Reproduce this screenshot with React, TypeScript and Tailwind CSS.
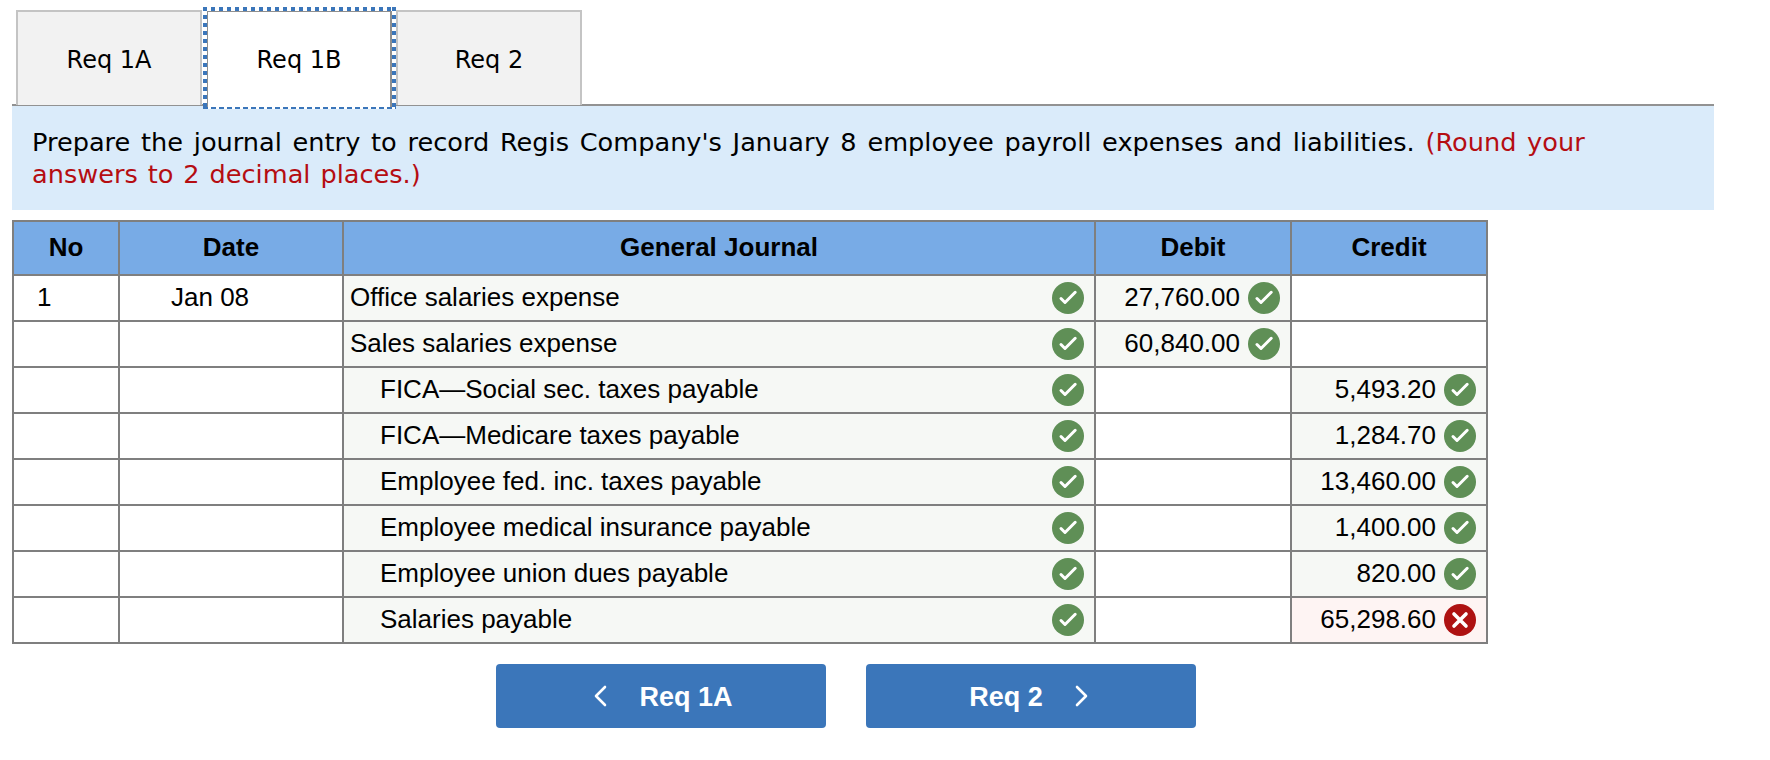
import React from "react";

function Ok() {
  return (
    <svg viewBox="0 0 32 32" className="w-8 h-8 shrink-0 block">
      <circle cx="16" cy="16" r="16" fill="#5f8f56" />
      <path d="M9 16.5 L13 20.5 L23.2 10.3" fill="none" stroke="#fff" strokeWidth="3" strokeLinecap="round" strokeLinejoin="round" />
    </svg>
  );
}

function Bad() {
  return (
    <svg viewBox="0 0 32 32" className="w-8 h-8 shrink-0 block">
      <circle cx="16" cy="16" r="16" fill="#ae1212" />
      <path d="M10 10 L22 22 M22 10 L10 22" fill="none" stroke="#fff" strokeWidth="3.6" strokeLinecap="round" />
    </svg>
  );
}

type Row = { no?: string; date?: string; acct: string; indent?: boolean; debit?: string; credit?: string; wrong?: boolean };

const rows: Row[] = [
  { no: "1", date: "Jan 08", acct: "Office salaries expense", debit: "27,760.00" },
  { acct: "Sales salaries expense", debit: "60,840.00" },
  { acct: "FICA—Social sec. taxes payable", indent: true, credit: "5,493.20" },
  { acct: "FICA—Medicare taxes payable", indent: true, credit: "1,284.70" },
  { acct: "Employee fed. inc. taxes payable", indent: true, credit: "13,460.00" },
  { acct: "Employee medical insurance payable", indent: true, credit: "1,400.00" },
  { acct: "Employee union dues payable", indent: true, credit: "820.00" },
  { acct: "Salaries payable", indent: true, credit: "65,298.60", wrong: true },
];

function Amount({ value, wrong }: { value?: string; wrong?: boolean }) {
  if (!value) return <td className="border-2 border-[#7f7f7f] bg-white p-0" />;
  return (
    <td className={`border-2 border-[#7f7f7f] p-0 ${wrong ? "bg-[#fef4f3]" : "bg-[#f6f8f5]"}`}>
      <div className="flex items-center justify-end gap-2 pr-[10px]">
        <span className="pb-[2px]">{value}</span>
        {wrong ? <Bad /> : <Ok />}
      </div>
    </td>
  );
}

function Tab({ label, active }: { label: string; active?: boolean }) {
  if (active) {
    return (
      <div className="relative z-10 w-[186px] h-[97px] bg-white border-2 border-b-0 border-[#8f8f8f] flex items-center justify-center text-black">
        {label}
        <span className="absolute left-[-5px] right-[-6px] top-[-5px] h-[4px] bg-[repeating-linear-gradient(90deg,#3b76ba_0,#3b76ba_4px,#ffffff_4px,#ffffff_8px)]" />
        <span className="absolute left-[-5px] top-[-5px] bottom-[-2px] w-[4px] bg-[repeating-linear-gradient(180deg,#3b76ba_0,#3b76ba_4px,#ffffff_4px,#ffffff_8px)]" />
        <span className="absolute right-[-6px] top-[-5px] bottom-[-2px] w-[4px] bg-[repeating-linear-gradient(180deg,#3b76ba_0,#3b76ba_4px,#ffffff_4px,#ffffff_8px)]" />
        <span className="absolute left-[-5px] right-[-6px] bottom-[-2px] h-[2px] bg-[repeating-linear-gradient(90deg,#3b76ba_0,#3b76ba_5px,#ffffff_5px,#ffffff_8px)]" />
      </div>
    );
  }
  return (
    <div className="w-[186px] h-[95px] bg-[#f2f2f2] border-2 border-b-0 border-[#c4c4c4] flex items-center justify-center pt-[2px] text-black">
      {label}
    </div>
  );
}

const Chevron = ({ dir }: { dir: "left" | "right" }) => (
  <svg viewBox="0 0 14 22" className="w-[14px] h-[22px] block">
    <path
      d={dir === "left" ? "M12 2 L3 11 L12 20" : "M2 2 L11 11 L2 20"}
      fill="none"
      stroke="#fff"
      strokeWidth="2.6"
      strokeLinecap="round"
      strokeLinejoin="round"
    />
  </svg>
);

export default function App() {
  return (
    <div className="w-[1770px] h-[760px] bg-white pt-[10px] overflow-hidden font-['Liberation_Sans',Arial,sans-serif] text-black">
      <div className="ml-4 flex gap-1 items-start h-[94px] text-[24px] font-['DejaVu_Sans',Verdana,sans-serif]">
        <Tab label="Req 1A" />
        <Tab label="Req 1B" active />
        <Tab label="Req 2" />
      </div>
      <div className="ml-3 w-[1702px] h-[106px] bg-[#daebfa] border-t-2 border-[#929292] pl-[20px] pt-[20px] text-[25.6px] leading-[32px] [word-spacing:2.6px] font-['DejaVu_Sans',Verdana,sans-serif]">
        Prepare the journal entry to record Regis Company's January 8 employee payroll expenses and liabilities.{" "}
        <span className="text-[#b50d12]">
          (Round your
          <br />
          <span className="[word-spacing:1.8px]">answers to 2 decimal places.)</span>
        </span>
      </div>
      <table className="ml-3 mt-[10px] table-fixed border-collapse text-[26px] leading-[32px] w-[1474px]">
        <colgroup>
          <col className="w-[106px]" />
          <col className="w-[224px]" />
          <col className="w-[752px]" />
          <col className="w-[196px]" />
          <col className="w-[196px]" />
        </colgroup>
        <thead>
          <tr className="h-[54px] bg-[#78abe6]">
            {["No", "Date", "General Journal", "Debit", "Credit"].map((h) => (
              <th key={h} className="border-2 border-[#7f7f7f] p-0 pb-[2px] font-bold text-center">
                {h}
              </th>
            ))}
          </tr>
        </thead>
        <tbody>
          {rows.map((r, i) => (
            <tr key={i} className="h-[46px]">
              <td className="border-2 border-[#7f7f7f] bg-white p-0 pl-[23px] pb-[2px]">{r.no}</td>
              <td className="border-2 border-[#7f7f7f] bg-white p-0 pl-[51px] pb-[2px]">{r.date}</td>
              <td className="border-2 border-[#7f7f7f] bg-[#f6f8f5] p-0">
                <div className={`flex items-center justify-between pr-[10px] ${r.indent ? "pl-[36px]" : "pl-[6px]"}`}>
                  <span className="pb-[2px]">{r.acct}</span>
                  <Ok />
                </div>
              </td>
              <Amount value={r.debit} />
              <Amount value={r.credit} wrong={r.wrong} />
            </tr>
          ))}
        </tbody>
      </table>
      <div className="ml-[496px] mt-[20px] flex gap-10 text-[27px] font-bold text-white">
        <button className="w-[330px] h-[64px] rounded-[4px] bg-[#3b76ba] flex items-center justify-center gap-[32px] pl-[4px]">
          <Chevron dir="left" />
          <span className="pt-[2px]">Req 1A</span>
        </button>
        <button className="w-[330px] h-[64px] rounded-[4px] bg-[#3b76ba] flex items-center justify-center gap-[32px] pr-[4px]">
          <span className="pt-[2px]">Req 2</span>
          <Chevron dir="right" />
        </button>
      </div>
    </div>
  );
}
